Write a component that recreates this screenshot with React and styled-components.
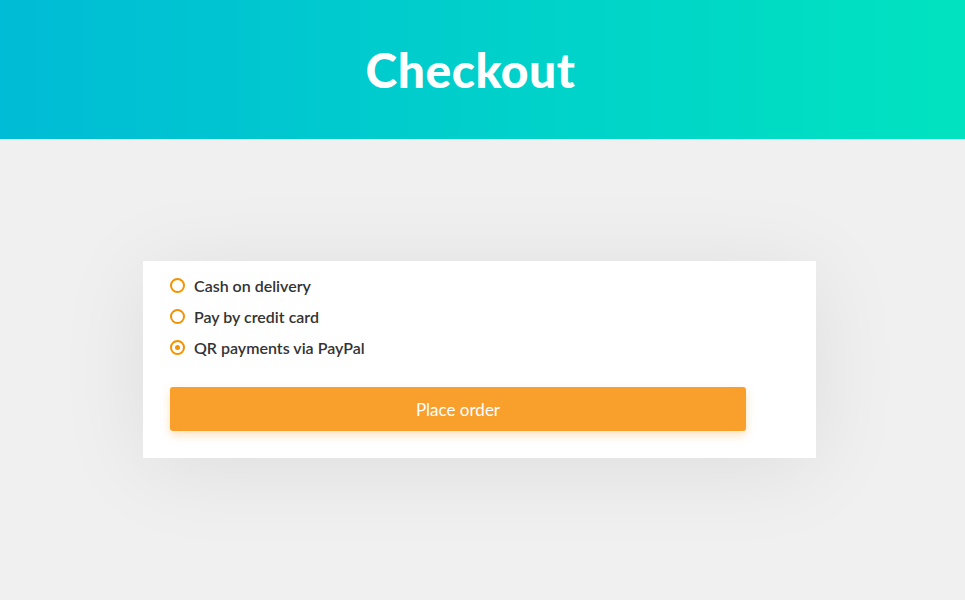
import React, { useState } from "react";
import styled, { createGlobalStyle } from "styled-components";

const GlobalStyle = createGlobalStyle`
  html, body {
    margin: 0;
    padding: 0;
    background: #f0f0f0;
    font-family: Lato, "Open Sans", sans-serif;
  }
  body {
    min-height: 100vh;
  }
`;

const Header = styled.header`
  height: 139px;
  display: flex;
  align-items: center;
  justify-content: center;
  background: linear-gradient(90deg, #00bcd6 0%, #00e3c0 100%);
`;

const Title = styled.h1`
  margin: 0;
  color: #fff;
  font-family: Lato, sans-serif;
  font-weight: 900;
  font-size: 48px;
  letter-spacing: 0.5px;
  transform: translateX(-12px);
`;

const Main = styled.main`
  display: flex;
  justify-content: center;
  padding: 122px 0 140px;
`;

const Card = styled.section`
  position: relative;
  width: 673px;
  box-sizing: border-box;
  padding: 9px 27px 27px;
  background: #fff;
  box-shadow: 0 10px 90px rgba(0, 0, 0, 0.08);
  transform: translateX(-3px);
`;

const Options = styled.ul`
  list-style: none;
  margin: 0 0 24px;
  padding: 0;
`;

const Option = styled.li`
  display: flex;
  align-items: center;
  gap: 9px;
  height: 31px;
  font-size: 16px;
  font-weight: 600;
  color: #333;
  cursor: pointer;
`;

const Radio = styled.span`
  width: 15px;
  height: 15px;
  box-sizing: border-box;
  border: 2px solid #f39200;
  border-radius: 50%;
  display: flex;
  align-items: center;
  justify-content: center;
  &::after {
    content: "";
    width: 5px;
    height: 5px;
    border-radius: 50%;
    background: ${(p) => (p.$checked ? "#f39200" : "transparent")};
  }
`;

const OrderButton = styled.button`
  display: block;
  width: 576px;
  height: 44px;
  border: none;
  border-radius: 3px;
  background: #f89f2c;
  color: #fff;
  font-family: Lato, sans-serif;
  font-size: 17px;
  box-shadow: 0 4px 10px rgba(248, 159, 44, 0.3);
  cursor: pointer;
`;

const methods = ["Cash on delivery", "Pay by credit card", "QR payments via PayPal"];

const App = () => {
  const [selected, setSelected] = useState(2);
  return (
    <>
      <GlobalStyle />
      <Header>
        <Title>Checkout</Title>
      </Header>
      <Main>
        <Card>
          <Options>
            {methods.map((m, i) => (
              <Option key={m} onClick={() => setSelected(i)}>
                <Radio $checked={selected === i} />
                {m}
              </Option>
            ))}
          </Options>
          <OrderButton>Place order</OrderButton>
        </Card>
      </Main>
    </>
  );
};

export default App;
